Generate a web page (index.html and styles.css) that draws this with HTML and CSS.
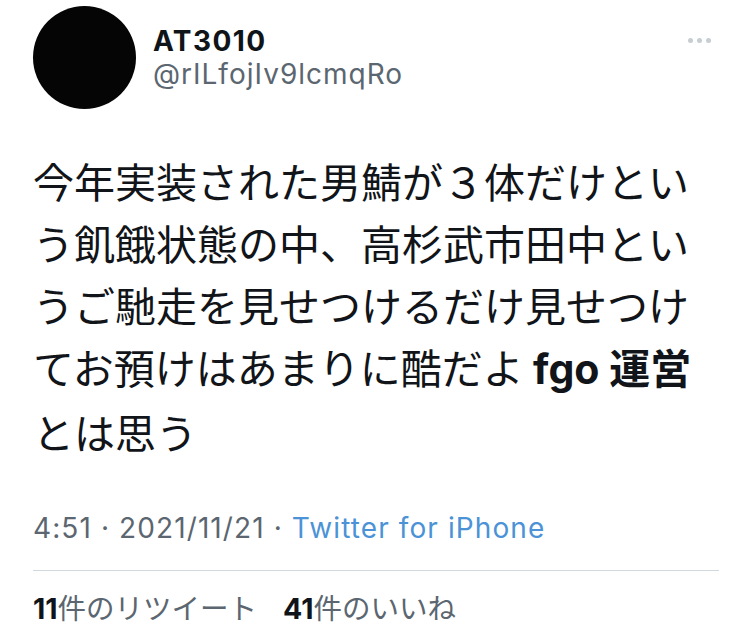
FILE: index.html
```html
<!DOCTYPE html>
<html lang="ja">
<head>
<meta charset="utf-8">
<title>Tweet</title>
<link rel="stylesheet" href="styles.css">
</head>
<body>
<article class="tweet">
  <header class="head">
    <div class="avatar"></div>
    <div class="names">
      <div class="name">AT3010</div>
      <div class="handle">@rILfojIv9lcmqRo</div>
    </div>
    <div class="more"><span></span><span></span><span></span></div>
  </header>
  <p class="text">今年実装された男鯖が３体だけという飢餓状態の中、高杉武市田中というご馳走を見せつけるだけ見せつけてお預けはあまりに酷だよ <b>fgo 運営</b>とは思う</p>
  <div class="meta">4:51 · 2021/11/21 · <span class="source">Twitter for iPhone</span></div>
  <div class="stats">
    <span class="stat"><b>11</b>件のリツイート</span>
    <span class="stat"><b>41</b>件のいいね</span>
  </div>
</article>
</body>
</html>
```
FILE: styles.css
```css
html, body {
  margin: 0;
  padding: 0;
  background: #ffffff;
}

body {
  font-family: "Inter", "Noto Sans CJK JP", sans-serif;
  color: #0f1419;
}

.tweet {
  padding: 6px 13px 0 33px;
}

.head {
  display: flex;
  align-items: flex-start;
  gap: 17px;
}

.avatar {
  width: 103px;
  height: 103px;
  border-radius: 50%;
  background: #050505;
  flex: none;
}

.names {
  padding-top: 19px;
  flex: 1;
}

.name {
  font-size: 28px;
  font-weight: 700;
  line-height: 32px;
  color: #0f1419;
  letter-spacing: 1.4px;
}

.handle {
  font-size: 28px;
  line-height: 32px;
  color: #5b6670;
  margin-top: 1px;
  letter-spacing: 1px;
}

.more {
  display: flex;
  gap: 4px;
  padding: 32px 8px 0 0;
}

.more span {
  width: 5px;
  height: 5px;
  border-radius: 50%;
  background: #c6cdd3;
}

.text {
  margin: 40px 0 0;
  font-size: 41px;
  line-height: 62px;
  font-weight: 400;
  color: #111418;
  font-family: "Noto Sans CJK JP", sans-serif;
}

.text b {
  font-family: "Inter", "Noto Sans CJK JP", sans-serif;
  font-weight: 700;
}

.meta {
  margin-top: 50px;
  font-size: 28px;
  line-height: 32px;
  color: #5b6670;
  padding-bottom: 26px;
  border-bottom: 1px solid #d3d8dc;
  letter-spacing: 1.1px;
}

.source {
  color: #4b93d6;
}

.stats {
  display: flex;
  gap: 26px;
  padding-top: 21px;
  font-size: 28.5px;
  line-height: 34px;
  color: #5b6670;
}

.stats b {
  color: #0f1419;
  font-weight: 700;
}
```
